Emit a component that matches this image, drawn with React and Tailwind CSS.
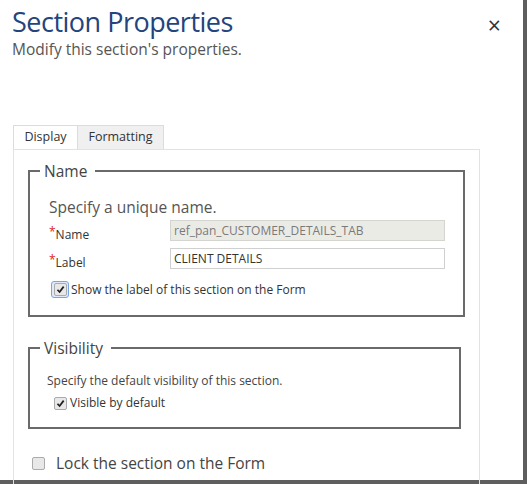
import React from "react"

const font = "font-['Segoe_UI','Open_Sans',sans-serif]"

function Box({ checked }) {
  return (
    <span className="inline-flex h-[13px] w-[13px] shrink-0 items-center justify-center rounded-[2px] border border-[#ababab] bg-[#e8e8e8]">
      {checked && (
        <svg viewBox="0 0 10 10" className="h-[9px] w-[9px]">
          <path d="M1.6 5.3 L4 7.8 L8.5 1.8" fill="none" stroke="#1e1e1e" strokeWidth="1.9" />
        </svg>
      )}
    </span>
  )
}

function FocusBox() {
  return (
    <span className="inline-flex h-[17px] w-[18px] shrink-0 items-center justify-center rounded-[3px] border border-[#76a5ea] bg-[#dfe9f8]">
      <Box checked />
    </span>
  )
}

function Field({ label, value, disabled }) {
  return (
    <div className="flex h-[21px] items-center text-[12px] text-[#333]">
      <span className="relative top-[4px] w-[121px]">
        <span className="relative -top-[3px] text-[#d22]">*</span>
        {label}
      </span>
      <div
        className={`flex h-[21px] w-[275px] items-center border px-[3px] ${
          disabled ? "border-[#d4d4d0] bg-[#ebebe6] text-[#7a7a7a]" : "border-[#d0d0d0] bg-white text-[#333]"
        }`}
      >
        {value}
      </div>
    </div>
  )
}

export default function App() {
  return (
    <div className={`h-[484px] w-[527px] overflow-hidden bg-white ${font}`}>
      <div className="h-[484px] w-[527px] border-r-[4px] border-b-[4px] border-[#5e5e5e] bg-white">
        {/* Header */}
        <div className="flex items-start justify-between pl-[12px] pr-[22px] pt-[4px]">
          <div>
            <h1 className="text-[27px] leading-[36px] tracking-[-0.5px] text-[#23447d]">Section Properties</h1>
            <p className="-mt-[1px] text-[15.5px] leading-[20px] text-[#555]">Modify this section's properties.</p>
          </div>
          <span className="mt-[10px] text-[23px] leading-none text-[#333]">×</span>
        </div>

        {/* Tabs */}
        <div className="ml-[13px] mt-[66px] w-[467px]">
          <div className="flex text-[12.5px] text-[#333]">
            <div className="flex h-[24px] w-[65px] items-center justify-center border border-b-0 border-[#dcdcdc] bg-white">
              Display
            </div>
            <div className="flex h-[24px] w-[86px] items-center justify-center border border-b-0 border-l-0 border-[#dcdcdc] bg-[#f0f0f0]">
              Formatting
            </div>
          </div>

          {/* Panel */}
          <div className="h-[400px] border border-b-0 border-[#e2e2e2] px-[14px] pt-[11px]">
            <fieldset className="h-[156px] w-[437px] border-2 border-[#6a6a6a]">
              <legend className="ml-[10px] pl-[4px] pr-[8px] text-[15.5px] leading-[20px] text-[#444]">Name</legend>
              <div className="pl-[19px]">
                <p className="mt-[16px] text-[15.5px] leading-[20px] text-[#555]">Specify a unique name.</p>
                <div className="mt-[3px] flex flex-col gap-[7px]">
                  <Field label="Name" value="ref_pan_CUSTOMER_DETAILS_TAB" disabled />
                  <Field label="Label" value="CLIENT DETAILS" />
                </div>
                <label className="mt-[12px] flex items-center gap-[2px] pl-[2px] text-[12px] leading-[17px] text-[#333]">
                  <FocusBox />
                  Show the label of this section on the Form
                </label>
              </div>
            </fieldset>

            <fieldset className="mt-[21px] h-[91px] w-[433px] border-2 border-[#6a6a6a]">
              <legend className="ml-[10px] pl-[4px] pr-[8px] text-[15.5px] leading-[20px] text-[#444]">Visibility</legend>
              <div className="pl-[17px]">
                <p className="mt-[15px] text-[12px] leading-[16px] text-[#444]">Specify the default visibility of this section.</p>
                <label className="mt-[6px] flex items-center gap-[3px] pl-[7px] text-[12px] leading-[16px] text-[#333]">
                  <Box checked />
                  Visible by default
                </label>
              </div>
            </fieldset>

            <label className="mt-[24px] flex items-center gap-[11px] pl-[4px] text-[15.5px] leading-[20px] text-[#444]">
              <Box />
              Lock the section on the Form
            </label>
          </div>
        </div>
      </div>
    </div>
  )
}
